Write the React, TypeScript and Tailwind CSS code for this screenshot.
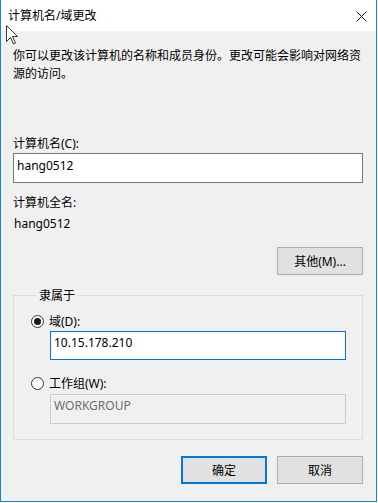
const FONT = { fontFamily: '"Noto Sans", "Noto Sans CJK SC", sans-serif' };

function Radio({ checked }: { checked: boolean }) {
  return (
    <span className="flex h-[13px] w-[13px] items-center justify-center rounded-full border border-[#333333] bg-white">
      {checked && <span className="h-[7px] w-[7px] rounded-full bg-[#1a1a1a]" />}
    </span>
  );
}

export default function App() {
  return (
    <div className="relative h-[503px] w-[378px] bg-white text-[12px] leading-[19px] text-black" style={FONT}>
      <div className="flex h-[502px] w-[377px] flex-col border-x border-b border-[#1883d7] bg-[#f0f0f0]">
        {/* 标题栏 */}
        <div className="flex h-[31px] items-center justify-between bg-white pl-[7px] pr-[9px]">
          <span>计算机名/域更改</span>
          <svg width="11" height="11" viewBox="0 0 11 11" className="mt-[1px]">
            <path d="M0.5 0.5 L10.5 10.5 M10.5 0.5 L0.5 10.5" stroke="#111" strokeWidth="1" />
          </svg>
        </div>

        <div className="flex flex-col pl-[12px] pr-[13px]">
          <p className="mt-[16px] leading-[18px]">
            你可以更改该计算机的名称和成员身份。更改可能会影响对网络资
            <br />
            源的访问。
          </p>

          <div className="mt-[51px]">计算机名(C):</div>
          <div className="h-[30px] border border-[#7a7a7a] bg-white pl-[3px] pt-[2px]">hang0512</div>

          <div className="mt-[10px]">计算机全名:</div>
          <div className="mt-[2px] pl-[1px]">hang0512</div>

          <div className="mt-[14px] flex justify-end">
            <button className="h-[28px] w-[86px] border border-[#adadad] bg-[#e1e1e1]">其他(M)...</button>
          </div>

          <fieldset className="mt-[11px] border border-[#dcdcdc] pb-[15px] pl-[17px] pr-[16px]">
            <legend className="ml-[6px] px-[2px]">隶属于</legend>
            <label className="mt-[7px] flex items-center gap-[5px]">
              <Radio checked />
              <span>域(D):</span>
            </label>
            <div className="ml-[19px] h-[29px] border border-[#0078d7] bg-white pl-[3px] pt-[1px]">
              10.15.178.210
            </div>
            <label className="mt-[14px] flex items-center gap-[5px]">
              <Radio checked={false} />
              <span>工作组(W):</span>
            </label>
            <div className="ml-[19px] mt-[1px] h-[30px] border border-[#cccccc] bg-[#f0f0f0] pl-[3px] pt-[1px] text-[#6d6d6d]">
              WORKGROUP
            </div>
          </fieldset>

          <div className="mt-[16px] flex justify-end gap-[10px]">
            <button className="h-[28px] w-[86px] border-2 border-[#0078d7] bg-[#e1e1e1]">确定</button>
            <button className="h-[28px] w-[86px] border border-[#adadad] bg-[#e1e1e1]">取消</button>
          </div>
        </div>
      </div>

      {/* 鼠标指针 */}
      <svg className="absolute left-[6px] top-[25px]" width="12" height="20" viewBox="0 0 12 20">
        <path
          d="M0.5 0.5 L0.5 16.5 L4.5 12.5 L7.5 19 L9.5 18 L6.5 11.5 L11.5 11.5 Z"
          fill="#fff"
          stroke="#333"
          strokeWidth="1"
          strokeLinejoin="miter"
        />
      </svg>
    </div>
  );
}
